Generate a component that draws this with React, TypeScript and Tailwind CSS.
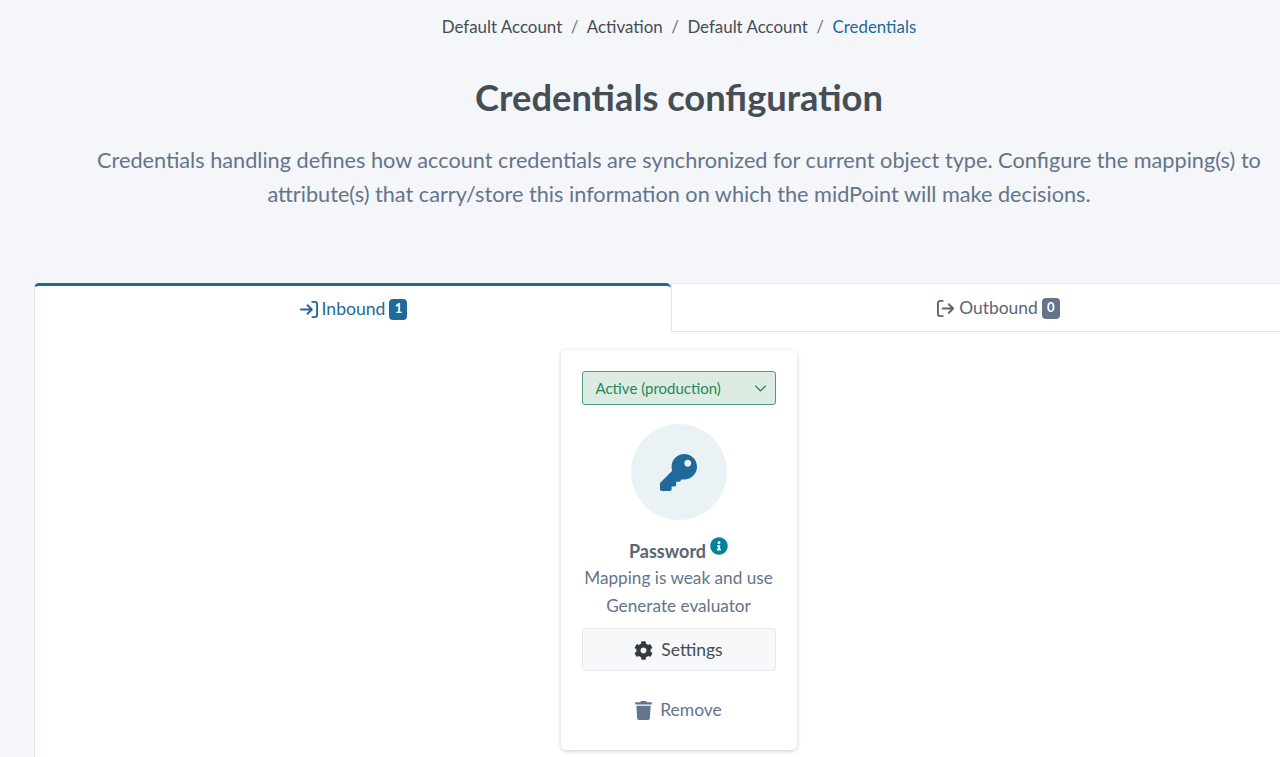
import React from "react";
import { FaCog, FaInfoCircle, FaKey, FaTrash } from "react-icons/fa";
import { ChevronDown } from "lucide-react";

const crumbs = ["Default Account", "Activation", "Default Account"];

const SignIn = () => (
  <svg viewBox="0 0 20 20" className="h-[19px] w-[20px]" fill="none" stroke="currentColor" strokeWidth="2" strokeLinecap="round" strokeLinejoin="round">
    <path d="M1.5 10h11M8.5 5.5l4.5 4.5-4.5 4.5" />
    <path d="M13.5 2h2.5a2.5 2.5 0 0 1 2.5 2.5v11a2.5 2.5 0 0 1-2.5 2.5h-2.5" />
  </svg>
);

const SignOut = () => (
  <svg viewBox="0 0 20 20" className="h-[19px] w-[20px]" fill="none" stroke="currentColor" strokeWidth="2" strokeLinecap="round" strokeLinejoin="round">
    <path d="M6.5 10h11M13 5.5l4.5 4.5-4.5 4.5" />
    <path d="M6.5 2H4a2.5 2.5 0 0 0-2.5 2.5v11A2.5 2.5 0 0 0 4 18h2.5" />
  </svg>
);

export default function App() {
  return (
    <div className="h-[757px] w-[1280px] overflow-hidden bg-[#f4f6f9] pl-[34px] font-['Lato','Liberation_Sans',sans-serif]">
      <div className="w-[1290px]">
        <nav className="flex h-[53px] items-center justify-center text-[16.9px] text-[#454d55]">
          {crumbs.map((c, i) => (
            <React.Fragment key={i}>
              <span>{c}</span>
              <span className="mx-[8.5px] text-[#6c757d]">/</span>
            </React.Fragment>
          ))}
          <span className="text-[#1f6a9a]">Credentials</span>
        </nav>
        <h1 className="mt-[18px] text-center text-[36.3px] leading-[52px] font-bold text-[#454d55]">
          Credentials configuration
        </h1>
        <p className="mx-auto mt-[20px] w-[1180px] text-center text-[21.7px] leading-[34px] text-[#64748b]">
          Credentials handling defines how account credentials are synchronized for current object type. Configure the mapping(s) to attribute(s) that carry/store this information on which the midPoint will make decisions.
        </p>
        <div className="mt-[72px] flex h-[49px]">
          <div className="flex w-[637px] items-center justify-center gap-[3px] rounded-t-[5px] border-t-[3px] border-l border-t-[#1f6a9a] border-l-[#e2e6ea] bg-white text-[17.6px] text-[#1f6a9a]">
            <SignIn />
            <span>Inbound</span>
            <span className="ml-[1px] flex h-[21px] w-[18px] items-center justify-center rounded-[4px] bg-[#1f6a9a] text-[13px] font-bold text-white">1</span>
          </div>
          <div className="flex flex-1 items-center justify-center gap-[3px] border border-r-0 border-[#e2e6ea] bg-white pt-[1px] text-[17.4px] text-[#5b6570]">
            <SignOut />
            <span>Outbound</span>
            <span className="ml-[1px] flex h-[21px] w-[18px] items-center justify-center rounded-[4px] bg-[#64748b] text-[13px] font-bold text-white">0</span>
          </div>
        </div>
        <div className="flex h-[426px] justify-center border-l border-[#e2e6ea] bg-white pt-[18px] pr-[2px]">
          <div className="flex h-[400px] w-[236px] flex-col items-center rounded-[5px] bg-white px-[21px] pt-[21px] shadow-[0_1px_4px_rgba(0,0,0,0.2)]">
            <div className="flex h-[34px] w-full items-center justify-between rounded-[3px] border border-[#4d9a78] bg-[#dcece3] pr-[5px] pl-[13px] text-[15px] text-[#22875a]">
              <span>Active (production)</span>
              <ChevronDown className="h-[19px] w-[19px] text-[#2b6f55]" strokeWidth={1.7} />
            </div>
            <div className="mt-[19px] flex h-[96px] w-[96px] items-center justify-center rounded-full bg-[#ebf2f6]">
              <FaKey className="h-[37px] w-[37px] text-[#1f6a9a]" />
            </div>
            <div className="mt-[17px] flex items-start gap-[4px] text-[18px] leading-[26px] font-bold text-[#5b6570]">
              <span className="mt-[1px]">Password</span>
              <FaInfoCircle className="h-[18px] w-[18px] text-[#00829b]" />
            </div>
            <p className="text-center text-[17.2px] leading-[28px] text-[#64748b]">
              Mapping is weak and use
              <br />
              Generate evaluator
            </p>
            <div className="mt-[8px] flex h-[43px] w-full items-center justify-center gap-[8px] rounded-[4px] border border-[#e5e8ec] bg-[#f6f8f9] pt-[1px] text-[17.5px] text-[#454d55]">
              <FaCog className="h-[19px] w-[19px] text-[#343a40]" />
              <span>Settings</span>
            </div>
            <div className="mt-[17px] flex h-[43px] items-center justify-center gap-[8px] pt-[1px] text-[17.5px] text-[#64748b]">
              <FaTrash className="h-[19px] w-[17px]" />
              <span>Remove</span>
            </div>
          </div>
        </div>
      </div>
    </div>
  );
}
